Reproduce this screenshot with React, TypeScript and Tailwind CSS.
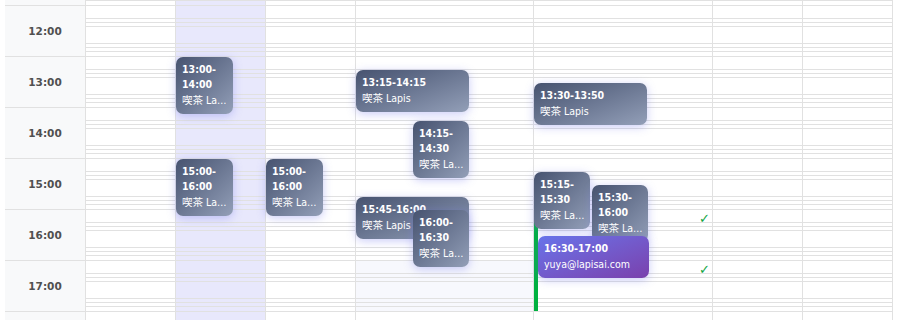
const HOUR = 51;
const START = 11;

const hours = [11, 12, 13, 14, 15, 16, 17, 18];

// px from the top of the grid (11:00) for a given time
const toY = (t: string) => {
  const [h, m] = t.split(':').map(Number);
  return ((h - START) * 60 + m) * (HOUR / 60);
};

const slots = [
  'h-[13px] border-t border-[#e1e1e1]',
  'h-[4px] border-t border-[#e1e1e1]',
  'h-[4px] border-t border-[#e1e1e1]',
  'h-[17px] border-t border-[#e1e1e1]',
  'h-[4px] border-t border-[#e1e1e1]',
  'h-[4px] border-t border-[#e1e1e1]',
  'h-[5px] border-t border-[#e1e1e1]',
];

type Ev = { start: string; label: string; name: string; left: number; width: number; purple?: boolean };

const columns: { cls: string; shade17?: boolean; events: Ev[]; now?: boolean }[] = [
  { cls: 'w-[90px]', events: [] },
  {
    cls: 'w-[90px] bg-[#e8e8fc]',
    events: [
      { start: '13:00', label: '13:00-14:00', name: '喫茶 Lapis', left: 0, width: 57 },
      { start: '15:00', label: '15:00-16:00', name: '喫茶 Lapis', left: 0, width: 57 },
    ],
  },
  {
    cls: 'w-[90px]',
    events: [{ start: '15:00', label: '15:00-16:00', name: '喫茶 Lapis', left: 0, width: 57 }],
  },
  {
    cls: 'w-[178px]',
    shade17: true,
    events: [
      { start: '13:15', label: '13:15-14:15', name: '喫茶 Lapis', left: 0, width: 113 },
      { start: '14:15', label: '14:15-14:30', name: '喫茶 Lapis', left: 57, width: 56 },
      { start: '15:45', label: '15:45-16:00', name: '喫茶 Lapis', left: 0, width: 113 },
      { start: '16:00', label: '16:00-16:30', name: '喫茶 Lapis', left: 57, width: 56 },
    ],
  },
  {
    cls: 'w-[179px]',
    now: true,
    events: [
      { start: '13:30', label: '13:30-13:50', name: '喫茶 Lapis', left: 0, width: 113 },
      { start: '15:15', label: '15:15-15:30', name: '喫茶 Lapis', left: 0, width: 56 },
      { start: '15:30', label: '15:30-16:00', name: '喫茶 Lapis', left: 58, width: 56 },
      { start: '16:30', label: '16:30-17:00', name: 'yuya@lapisai.com', left: 4, width: 111, purple: true },
    ],
  },
  { cls: 'w-[90px]', events: [] },
  { cls: 'w-[90px]', events: [] },
];

const EventCard = ({ ev }: { ev: Ev }) => (
  <div
    className={
      "absolute z-10 rounded-[7px] pl-[6px] pr-[4px] pt-[5px] pb-[6px] font-['DejaVu_Sans_Condensed','DejaVu_Sans','Noto_Sans_CJK_JP',sans-serif] text-white shadow-[0_2px_10px_rgba(102,110,234,0.35)] " +
      (ev.purple
        ? 'bg-linear-to-br from-[#6673ea] to-[#7940ad]'
        : 'bg-linear-to-br from-[#475370] to-[#939fb8]')
    }
    style={{ top: toY(ev.start) + 1, left: ev.left, width: ev.width }}
  >
    <div className="text-[10.5px] font-bold leading-[15px]">{ev.label}</div>
    <div className="mt-[1px] truncate text-[10.5px] leading-[15px]">{ev.name}</div>
  </div>
);

const Check = ({ at }: { at: string }) => (
  <span
    className="absolute right-[2px] text-[13px] font-bold leading-none text-[#13a543]"
    style={{ top: toY(at) + 3 }}
  >
    ✓
  </span>
);

export default function App() {
  return (
    <div className="h-[320px] w-[901px] overflow-hidden bg-white font-['DejaVu_Sans','Noto_Sans_CJK_JP',sans-serif]">
      <div className="ml-[5px] -mt-[46px] flex">
        <div className="w-[81px] shrink-0 border-r border-[#e1e1e1] bg-[#f8f9fa]">
          {hours.map((h) => (
            <div
              key={h}
              className="flex h-[51px] items-center justify-center border-t border-[#e1e1e1] pt-[2px] text-[10.5px] font-bold text-[#505050]"
            >
              {h > 11 && h < 18 ? `${h}:00` : ''}
            </div>
          ))}
        </div>

        {columns.map((col, i) => (
          <div key={i} className={'relative shrink-0 border-r border-[#e1e1e1] ' + col.cls}>
            {hours.map((h) => (
              <div key={h} className={'flex flex-col ' + (col.shade17 && h === 17 ? 'bg-[#f7f8fd]' : '')}>
                {slots.map((s, j) => (
                  <div key={j} className={s} />
                ))}
              </div>
            ))}

            {col.now && (
              <>
                <div
                  className="absolute left-0 w-[4px] bg-[#00b140]"
                  style={{ top: toY('16:00') + 4, height: toY('18:00') - toY('16:00') - 4 }}
                />
                <Check at="16:00" />
                <Check at="17:00" />
              </>
            )}

            {col.events.map((ev, k) => (
              <EventCard key={k} ev={ev} />
            ))}
          </div>
        ))}
      </div>
    </div>
  );
}
